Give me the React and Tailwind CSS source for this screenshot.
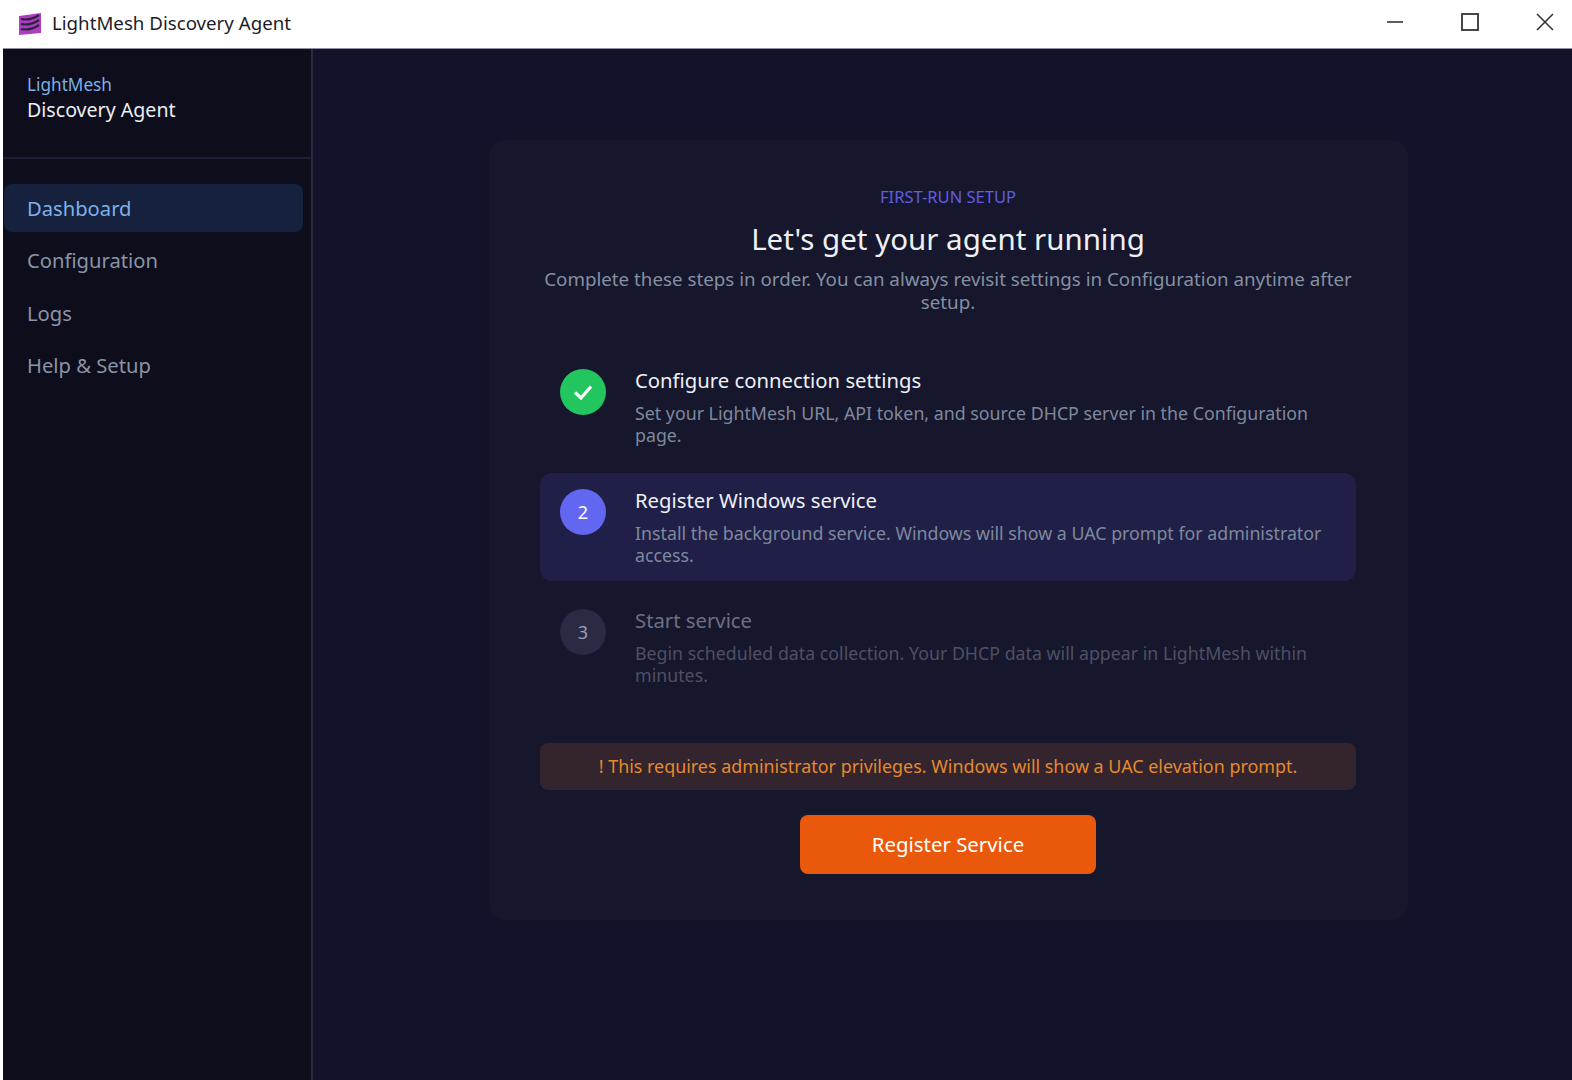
import React from "react";

const font = { fontFamily: '"Noto Sans", "Open Sans", sans-serif' };

function LogoIcon() {
  return (
    <svg width="24" height="24" viewBox="0 0 24 24" className="shrink-0">
      <path d="M1 4 L23 1 V21 L1 23 Z" fill="#b03cc0" />
      <path d="M3 7 Q12 9 21 3 M3 12 Q12 14 21 8 M3 17 Q12 19 21 13" stroke="#2a2440" strokeWidth="2.2" fill="none" />
    </svg>
  );
}

function NavItem({ label, active }) {
  return (
    <div className={`h-12 flex items-center pl-[23px] rounded-lg text-[20.2px] ${active ? "bg-[#16213e] text-[#7fb0e6]" : "text-[#8a94a6]"}`}>
      {label}
    </div>
  );
}

function Step({ badge, title, desc, state, className }) {
  const badgeCls =
    state === "done"
      ? "bg-[#22c55e] text-white"
      : state === "active"
        ? "bg-[#6366f1] text-white"
        : "bg-[#2a2a45] text-[#9a9fb5]";
  const titleCls = state === "pending" ? "text-[#6b7083]" : "text-[#eef0f4]";
  const descCls = state === "pending" ? "text-[#4d5163]" : "text-[#7f899c]";
  return (
    <div className={`flex rounded-xl pl-[20px] pr-[14px] pt-[16px] h-[108px] ${className || ""}`}>
      <div className={`w-[46px] h-[46px] rounded-full flex items-center justify-center text-[18px] shrink-0 ${badgeCls}`}>
        {badge}
      </div>
      <div className="ml-[29px] -mt-[3px]">
        <div className={`text-[20.3px] leading-[28px] ${titleCls}`}>{title}</div>
        <div className={`text-[17.8px] leading-[22px] mt-[8px] ${descCls}`}>{desc}</div>
      </div>
    </div>
  );
}

export default function App() {
  return (
    <div className="w-[1572px] h-[1080px] flex flex-col bg-white pl-[3px] overflow-hidden" style={font}>
      <div className="h-[49px] shrink-0 flex items-center bg-white border-b border-[#8f90a0] pl-[15px] pr-[18px]">
        <LogoIcon />
        <span className="ml-[10px] -mt-[2px] text-[18.7px] text-[#1c1c28]">LightMesh Discovery Agent</span>
        <div className="ml-auto flex items-center gap-[57px] text-[#333] -mt-[5px]">
          <svg width="18" height="18" viewBox="0 0 18 18"><path d="M1 9 H17" stroke="currentColor" strokeWidth="1.6" /></svg>
          <svg width="18" height="18" viewBox="0 0 18 18"><rect x="1" y="1" width="16" height="16" fill="none" stroke="currentColor" strokeWidth="1.8" /></svg>
          <svg width="18" height="18" viewBox="0 0 18 18"><path d="M1 1 L17 17 M17 1 L1 17" stroke="currentColor" strokeWidth="1.6" /></svg>
        </div>
      </div>
      <div className="flex-1 flex min-h-0 bg-[#12122a]">
        <div className="w-[310px] shrink-0 bg-[#0d0d1c] border-r-2 border-[#2a2a3e] flex flex-col">
          <div className="h-[110px] border-b-2 border-[#1f1d38] pl-[24px] pt-[24px]">
            <div className="text-[17.2px] leading-[24px] text-[#7fb0e6]">LightMesh</div>
            <div className="text-[19.6px] leading-[26px] text-[#eceef2]">Discovery Agent</div>
          </div>
          <div className="flex flex-col gap-[4.5px] pt-[25px] pl-[1px] pr-[8px]">
            <NavItem label="Dashboard" active />
            <NavItem label="Configuration" />
            <NavItem label="Logs" />
            <NavItem label="Help & Setup" />
          </div>
        </div>
        <div className="flex-1 pl-[176px] pt-[91px]">
          <div className="w-[919px] h-[780px] rounded-2xl bg-[#16162c] pl-[51px] pr-[52px] pt-[45px]">
            <div className="text-center text-[16.5px] leading-[24px] text-[#5f5fe0]">FIRST-RUN SETUP</div>
            <div className="text-center text-[29.5px] leading-[40px] mt-[10px] text-[#eef0f4]">Let's get your agent running</div>
            <div className="text-center text-[18.75px] leading-[23px] mt-[8px] text-[#8590a2]">
              Complete these steps in order. You can always revisit settings in Configuration anytime after setup.
            </div>
            <div className="mt-[40px] flex flex-col gap-[12px]">
              <Step
                state="done"
                badge={
                  <svg width="24" height="24" viewBox="0 0 24 24" fill="none" stroke="white" strokeWidth="3.2">
                    <path d="M4 12.5 L10 18 L20 6.5" />
                  </svg>
                }
                title="Configure connection settings"
                desc="Set your LightMesh URL, API token, and source DHCP server in the Configuration page."
              />
              <Step
                state="active"
                badge="2"
                className="bg-[#1f1f48]"
                title="Register Windows service"
                desc="Install the background service. Windows will show a UAC prompt for administrator access."
              />
              <Step
                state="pending"
                badge="3"
                title="Start service"
                desc="Begin scheduled data collection. Your DHCP data will appear in LightMesh within minutes."
              />
            </div>
            <div className="mt-[42px] h-[47px] rounded-lg bg-[#33242e] flex items-center justify-center text-[17.9px] text-[#e58a2e]">
              ! This requires administrator privileges. Windows will show a UAC elevation prompt.
            </div>
            <div className="flex justify-center mt-[25px]">
              <button className="w-[296px] h-[59px] rounded-lg bg-[#ea580c] text-white text-[20.4px]">Register Service</button>
            </div>
          </div>
        </div>
      </div>
    </div>
  );
}
